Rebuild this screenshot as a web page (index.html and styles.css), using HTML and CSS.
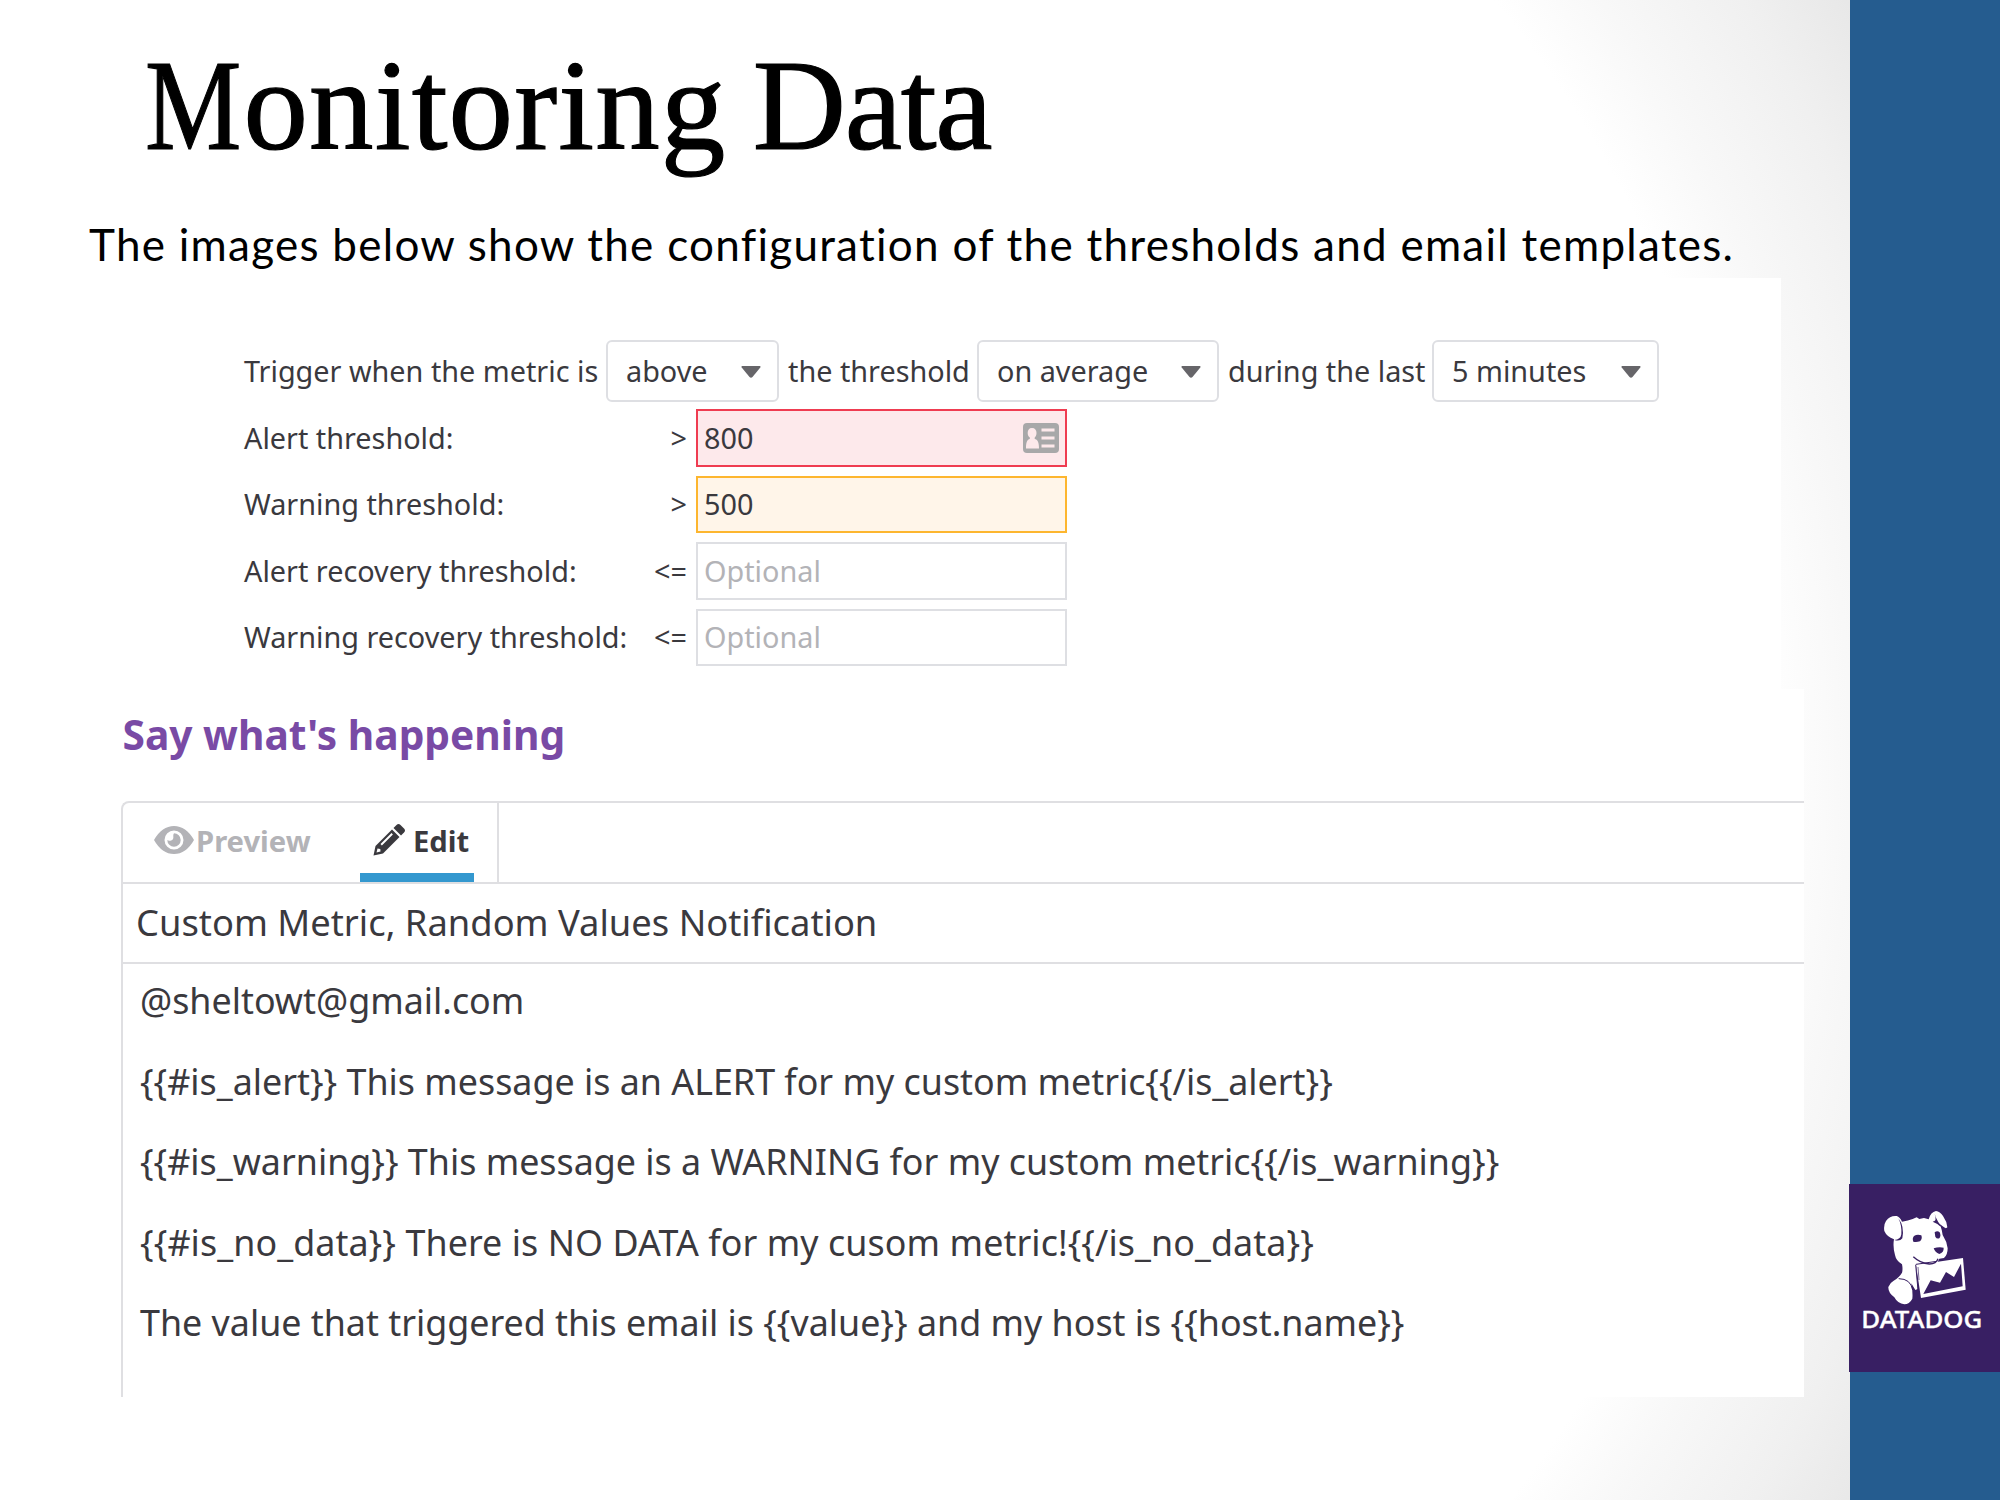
FILE: index.html
```html
<!DOCTYPE html>
<html lang="en">
<head>
<meta charset="utf-8">
<title>Monitoring Data</title>
<link rel="stylesheet" href="styles.css">
</head>
<body>
<div class="slide">
  <main class="content">
    <h1 class="title"><span class="initial">M</span><span class="word">onitoring</span> <span>Data</span></h1>
    <p class="subtitle"><span>The images below show the configuration of the thresholds and email templates.</span></p>

    <section class="thresholds">
      <div class="sentence">
        <span class="t1">Trigger when the metric is</span>
        <div class="select"><span>above</span><svg class="caret" viewBox="0 0 20 12"><path d="M1 0h18q1 .6.3 1.6L11.500 11q-1.500 1.400-3 0L.7 1.600Q0 .6 1 0z"/></svg></div>
        <span class="joiner">the threshold</span>
        <div class="select"><span>on average</span><svg class="caret" viewBox="0 0 20 12"><path d="M1 0h18q1 .6.3 1.6L11.500 11q-1.500 1.400-3 0L.7 1.600Q0 .6 1 0z"/></svg></div>
        <span class="joiner">during the last</span>
        <div class="select"><span>5 minutes</span><svg class="caret" viewBox="0 0 20 12"><path d="M1 0h18q1 .6.3 1.6L11.500 11q-1.500 1.400-3 0L.7 1.600Q0 .6 1 0z"/></svg></div>
      </div>
      <div class="fields">
        <span>Alert threshold:</span><span class="op">&gt;</span>
        <div class="input alert"><span>800</span>
          <svg class="card-icon" viewBox="0 0 36 30"><path fill="#a8a8a9" fill-rule="evenodd" d="M4 0h28q4 0 4 4v22q0 4-4 4H4q-4 0-4-4V4q0-4 4-4z"/><path fill="#fde9eb" d="M9 5c3 0 4.500 2 4.500 5 0 2-.8 3.500-1.800 4.500v1.500c2.800.8 4.300 2.500 4.300 9.500H3c0-7 1.300-8.700 3.800-9.500v-1.500C5.500 13.500 4.700 12 4.700 10c0-3 1.300-5 4.300-5zM18.500 5.500h13v3h-13zM18.500 13.500h13v3h-13zM18.500 21.500h13v3h-13z"/></svg>
        </div>
        <span>Warning threshold:</span><span class="op">&gt;</span>
        <div class="input warning"><span>500</span></div>
        <span>Alert recovery threshold:</span><span class="op">&lt;=</span>
        <div class="input optional"><span>Optional</span></div>
        <span>Warning recovery threshold:</span><span class="op">&lt;=</span>
        <div class="input optional"><span>Optional</span></div>
      </div>
    </section>

    <section class="message">
      <h2 class="heading"><span>Say what's happening</span></h2>
      <div class="editor">
        <div class="tabs">
          <div class="tab preview">
            <svg class="eye" viewBox="0 0 40 28"><path fill-rule="evenodd" d="M0 14Q8 0 20 0t20 14q-8 14-20 14T0 14zM20 4.500a9.500 9.500 0 1 0 0 19a9.500 9.500 0 1 0 0-19zM20 7.300a6.700 6.700 0 1 1-6.700 6.700q1.200 1.200 3.800.6Q19.800 13.500 19.300 10.500 19 8.500 20 7.300z"/></svg><span>Preview</span>
          </div>
          <div class="tab edit">
            <svg class="pencil" viewBox="0 0 32 32"><path fill-rule="evenodd" d="M19 5.500L26.500 13 10 29.500 0.500 31.500 2.500 22zM18.500 9L7.500 20l1.400 1.400L19.900 10.400zM4.500 24.500L3.500 28.500 7.500 27.500 7.300 25z"/><path d="M20.500 4l3-3q2-2 4 0L31 4.500q2 2 0 4l-3 3z"/></svg><span>Edit</span>
          </div>
        </div>
        <div class="subject"><span>Custom Metric, Random Values Notification</span></div>
        <div class="body">
          <p><span>@sheltowt@gmail.com</span></p>
          <p><span>{{#is_alert}} This message is an ALERT for my custom metric{{/is_alert}}</span></p>
          <p><span>{{#is_warning}} This message is a WARNING for my custom metric{{/is_warning}}</span></p>
          <p class="no-data"><span>{{#is_no_data}} There is NO DATA for my cusom metric!{{/is_no_data}}</span></p>
          <p><span>The value that triggered this email is {{value}} and my host is {{host.name}}</span></p>
        </div>
      </div>
    </section>
  </main>
  <aside class="stripe">
    <svg class="logo" viewBox="27 42 453 564">
      <rect x="27" y="42" width="453" height="564" fill="#381f63"/>
      <g fill="#fff">
        <path d="M186 155Q205 152 218 147L230 142 238 147 252 144 266 148Q272 126 288 123Q300 125 309 138Q321 155 322 172Q318 178 308 169L300 163Q306 180 308 195Q321 215 323 235Q323 255 312 264L298 266 292 277 228 287 233 357 226 360 214 340Q219 370 217 386Q208 403 193 403Q173 401 163 382Q144 368 145 351Q150 338 160 333Q178 322 186 308Q189 298 186 283Q168 272 165 255Q158 230 162 208Q140 200 133 183Q130 165 138 153Q150 136 170 138Q180 141 186 155z"/>
        <path d="M228 285L369 264 377 359 243 384z"/>
      </g>
      <g fill="#381f63">
        <path d="M175 145Q194 169 187 205Q180 215 163 210Q182 209 184 193Q186 166 175 145z"/>
        <path d="M284 132Q292 158 308 171Q300 171 292 162L278 155Q292 154 284 132z"/>
        <path d="M222 198Q232 191 244 196Q248 207 240 214Q228 218 220 215Q216 205 222 198z"/>
        <path d="M284 187Q292 181 299 187Q304 198 298 205Q290 208 286 200z"/>
        <path d="M281 235Q296 230 311 233Q312 247 298 252Q285 247 281 235z"/>
        <path d="M250 372L272 331 300 338 318 306 342 321 363 281 368 349z"/>
      </g>
      <g fill="none" stroke="#381f63" stroke-width="4">
        <path d="M220 260Q240 279 268 282Q289 281 294 266"/>
        <path d="M176 326Q212 326 218 360" stroke-width="3"/>
        <path d="M227 284L234 360M228 283L290 274" stroke-width="3"/>
        <path d="M234 291L237 330" stroke-width="2"/>
      </g>
      <text class="logo-text" x="64" y="475" textLength="363" lengthAdjust="spacingAndGlyphs">DATADOG</text>
    </svg>
  </aside>
</div>
</body>
</html>
```
FILE: styles.css
```css
* { box-sizing: border-box; }
body { margin: 0; font-family: "Noto Sans", sans-serif; color: #3a393e; }
h1, h2, p { margin: 0; }
span { white-space: nowrap; }

.slide { display: flex; width: 2000px; height: 1500px; overflow: hidden; }
.content {
  width: 1850px;
  padding-top: 41px;
  background: radial-gradient(circle at 565px 760px, #fff 1200px, #f8f8f8 1285px, #f0f0f0 1400px, #e7e7e7 1500px);
}
.stripe { width: 150px; background: #255c8f; padding-top: 1184px; }
.logo { display: block; width: 151px; height: 188px; margin-left: -1px; }
.logo-text { font: 500 71px "Noto Sans", sans-serif; fill: #fff; stroke: #fff; stroke-width: 1px; }

.title {
  height: 130px;
  padding-left: 145px;
  font: 400 129px/130px "Liberation Serif", serif;
  letter-spacing: -1.3px;
  word-spacing: -4.5px;
  color: #000;
  -webkit-text-stroke: 1.2px #000;
}
.initial { display: inline-block; width: 98.5px; transform: scaleX(.84); transform-origin: left; }
.word { letter-spacing: 1.1px; }
.subtitle {
  margin-top: 39px;
  padding-left: 89px;
  font: 400 44px/68px Lato, sans-serif;
  letter-spacing: 1.27px;
  color: #000;
}

.thresholds {
  width: 1781px;
  height: 411px;
  padding: 62px 0 0 244px;
  background: linear-gradient(to right, transparent 100px, #fff 100px);
  font-size: 28.8px;
}
.sentence {
  display: grid;
  grid-template-columns: 362px 173px 198px 242px 213px 227px;
  align-items: center;
  height: 62px;
}
.sentence span { padding-bottom: 2px; }
.joiner { padding-left: 9px; }
.select {
  display: flex;
  align-items: center;
  justify-content: space-between;
  height: 62px;
  padding: 0 16px 0 18px;
  border: 2px solid #dedfe3;
  border-radius: 6px;
  background: #fff;
}
.caret { width: 20px; height: 12px; fill: #666569; margin-top: 2px; }
.fields {
  display: grid;
  grid-template-columns: 400px 43px 371px;
  grid-auto-rows: 57.5px;
  gap: 9px 0;
  align-items: center;
  margin-top: 7px;
}
.fields span { padding-bottom: 1px; }
.op { text-align: right; }
.input {
  display: flex;
  align-items: center;
  justify-content: space-between;
  height: 100%;
  margin-left: 9px;
  margin-right: -9px;
  padding: 0 6px;
  border: 2px solid #dedfe3;
  background: #fff;
}
.alert { border-color: #ef3c51; background: #fde9eb; }
.warning { border-color: #fdb62f; background: #fff5e9; }
.optional { color: #b3b3b7; }
.card-icon { width: 36px; height: 30px; }

.message { width: 1804px; height: 708px; padding-left: 121px; background: #fff; }
.heading {
  height: 112px;
  padding-left: 1.5px;
  font-size: 40.7px;
  line-height: 90px;
  font-weight: 700;
  color: #794aa5;
}
.editor {
  height: 596px;
  border: solid #dfdfe2;
  border-width: 2px 0 0 2px;
  border-top-left-radius: 8px;
}
.tabs {
  display: flex;
  width: 376px;
  height: 79px;
  border-right: 2px solid #dfdfe2;
  font-size: 29.2px;
  font-weight: 700;
}
.tab { display: flex; align-items: center; height: 79px; }
.tab span { padding-bottom: 4px; }
.preview { margin-left: 31px; width: 206px; color: #b3b3b7; fill: #b3b3b7; }
.edit { width: 114px; padding-left: 13px; gap: 8px; border-bottom: 9px solid #3498cf; padding-top: 9px; fill: #3a393e; }
.eye { width: 40px; height: 28px; margin: 0 2px 6px 0; }
.pencil { width: 32px; height: 32px; margin-bottom: 6px; }
.subject {
  height: 82px;
  padding-left: 13px;
  border: solid #dfdfe2;
  border-width: 2px 0;
  font-size: 36.35px;
  line-height: 77px;
}
.body { margin-top: -3px; padding-left: 17px; font-size: 35.85px; line-height: 80.5px; }
.no-data { letter-spacing: .08px; }
```
